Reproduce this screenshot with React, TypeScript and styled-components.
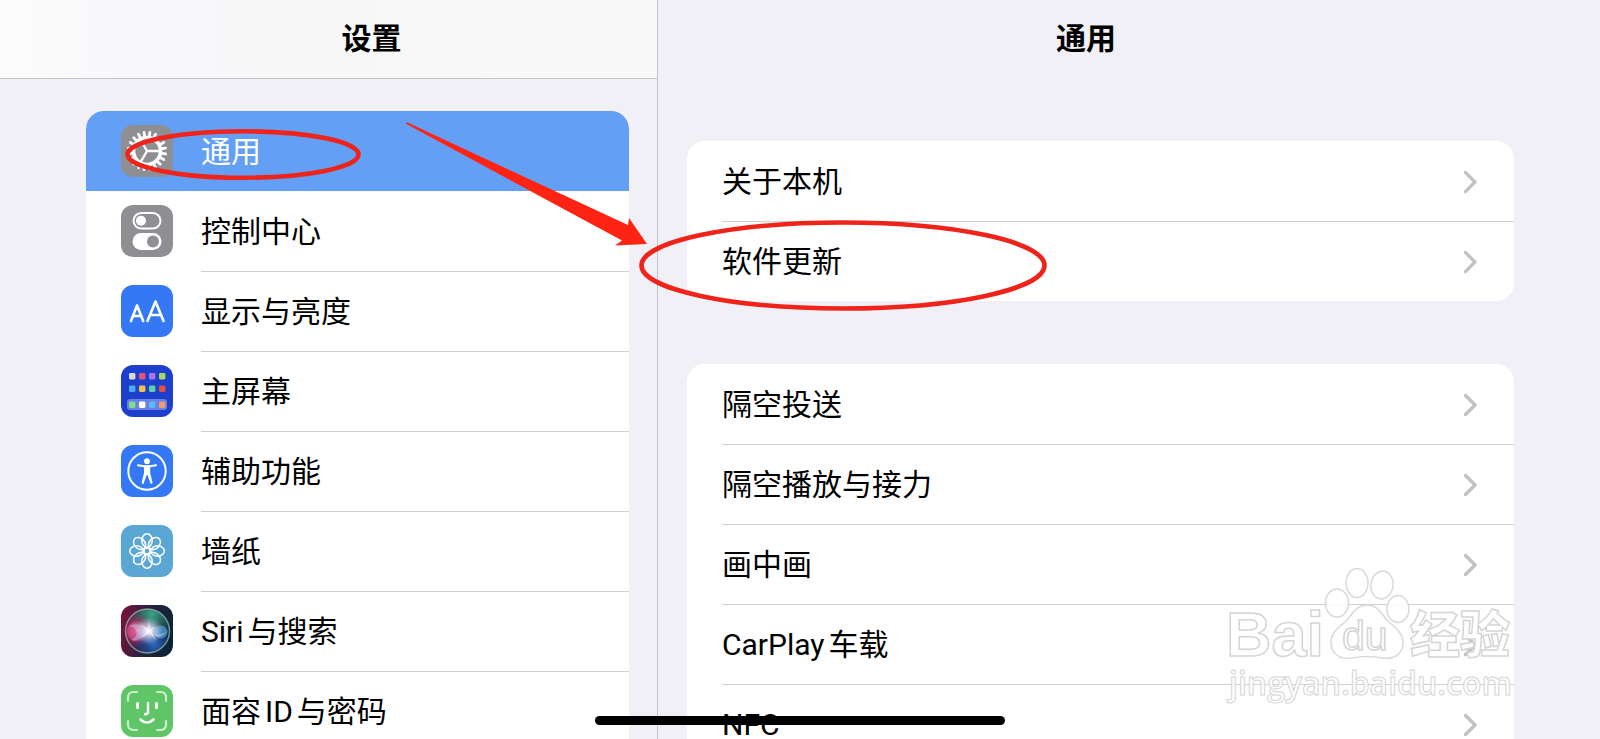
import React from 'react';
import styled, { createGlobalStyle } from 'styled-components';

const GlobalStyle = createGlobalStyle`
  * { box-sizing: border-box; }
  html, body { margin: 0; padding: 0; }
  body {
    background: #f1f0f6;
    color: #000;
    font-family: Roboto, "Noto Sans CJK SC", sans-serif;
    font-size: 30px;
    line-height: 40px;
    overflow: hidden;
  }
`;

const Screen = styled.div`
  position: relative;
  display: grid;
  grid-template-columns: 658px minmax(0, 1fr);
  height: 100vh;
  overflow: hidden;
`;

const Sidebar = styled.nav`
  border-right: 1px solid #c5c5c9;
  min-width: 0;
`;

const Detail = styled.main`
  min-width: 0;
  padding-right: 86px;
`;

const Header = styled.header<{ $bar?: boolean }>`
  display: flex;
  align-items: center;
  justify-content: center;
  height: 79px;
  padding-left: ${(p) => (p.$bar ? '86px' : '0')};
  border-bottom: 1px solid ${(p) => (p.$bar ? '#c6c6c9' : 'transparent')};
  background: ${(p) => (p.$bar ? 'linear-gradient(90deg, #fcfcfc 0, #f8f7fa 18%, #f7f7f8 45%, #f9f9f9 100%)' : 'none')};
`;

const Title = styled.h1`
  margin: 0;
  font-size: 30px;
  line-height: 40px;
  font-weight: 600;
`;

const SideList = styled.ul`
  list-style: none;
  margin: 32px 28px 0 86px;
  padding: 0;
  border-radius: 18px 18px 0 0;
  overflow: hidden;
  background: #fff;
`;

const Groups = styled.div`
  display: flex;
  flex-direction: column;
  gap: 63px;
  margin: 62px 0 0 29px;
`;

const Group = styled.ul`
  list-style: none;
  margin: 0;
  padding: 0;
  border-radius: 18px;
  overflow: hidden;
  background: #fff;
`;

const Label = styled.span<{ $divided: boolean }>`
  flex: 1;
  display: flex;
  align-items: center;
  justify-content: space-between;
  height: 80px;
  padding-right: 37px;
  border-top: 1px solid ${(p) => (p.$divided ? '#d0d0d3' : 'transparent')};
  white-space: nowrap;
`;

const Latin = styled.span<{ $inner: boolean }>`
  margin-left: ${(p) => (p.$inner ? '4px' : '0')};
  margin-right: 4px;
`;

const Row = styled.button<{ $active?: boolean }>`
  display: flex;
  align-items: center;
  gap: 28px;
  width: 100%;
  height: 80px;
  padding: 0 0 0 35px;
  border: 0;
  background: ${(p) => (p.$active ? '#649ff6' : 'transparent')};
  color: ${(p) => (p.$active ? '#fff' : '#000')};
  font: inherit;
  text-align: left;
  cursor: pointer;
`;

const Tile = styled.svg`
  flex: none;
  width: 52px;
  height: 52px;
  border-radius: 12px;
`;

const HomeBar = styled.div`
  position: absolute;
  left: 50%;
  bottom: 14px;
  width: 410px;
  height: 9px;
  margin-left: -205px;
  border-radius: 5px;
  background: #000;
`;

const Markup = styled.svg`
  position: absolute;
  top: 0;
  left: 0;
  pointer-events: none;
`;

const Watermark = styled.svg`
  position: absolute;
  right: 82px;
  bottom: 29px;
  pointer-events: none;
`;

const Arrow = styled.svg`
  flex: none;
  width: 14px;
  height: 24px;
`;

const Chevron = () => (
  <Arrow viewBox="0 0 14 24" aria-hidden="true">
    <path d="M2.5 2.5 12 12l-9.500 9.500" fill="none" stroke="#c3c3c5" strokeWidth="3.400" strokeLinecap="round" strokeLinejoin="round" />
  </Arrow>
);

// Latin words inside Chinese labels get a small gap on each side.
const Name = ({ text }: { text: string }) => (
  <span>
    {text.split(/([A-Za-z]+)/).filter(Boolean).map((part, i) =>
      /[A-Za-z]/.test(part) ? <Latin key={i} $inner={i > 0}>{part}</Latin> : part,
    )}
  </span>
);

const spin = (n: number, draw: (angle: number) => React.ReactNode) =>
  Array.from({ length: n }, (_, i) => draw((360 / n) * i));

const GearIcon = () => (
  <Tile viewBox="0 0 52 52">
    <rect width="52" height="52" fill="#8e8e93" />
    <g stroke="#fff" fill="none">
      <circle cx="26" cy="26" r="13.500" strokeWidth="3.600" />
      {spin(20, (a) => (
        <path key={a} d="M26 12V7.200" strokeWidth="2.800" strokeLinecap="round" transform={`rotate(${a + 9} 26 26)`} />
      ))}
      {spin(3, (a) => (
        <path key={a} d="M26 26h13" strokeWidth="2.400" transform={`rotate(${a} 26 26)`} />
      ))}
    </g>
  </Tile>
);

const ControlIcon = () => (
  <Tile viewBox="0 0 52 52">
    <rect width="52" height="52" fill="#8e8e93" />
    <rect x="12.500" y="8" width="27" height="15.500" rx="7.750" fill="none" stroke="#fff" strokeWidth="2" />
    <circle cx="20" cy="15.700" r="5" fill="#fff" />
    <rect x="11.500" y="28" width="29" height="17" rx="8.500" fill="#fff" />
    <circle cx="32" cy="36.500" r="6" fill="#8e8e93" />
  </Tile>
);

const DisplayIcon = () => (
  <Tile viewBox="0 0 52 52">
    <rect width="52" height="52" fill="#3478f6" />
    <g fill="none" stroke="#fff" strokeWidth="2.600" strokeLinecap="round" strokeLinejoin="round">
      <path d="M10 36l6-15.500L22.200 36M12 31h8" />
      <path d="M26.500 36l8-19.500L42.500 36M29.300 30h10.400" />
    </g>
  </Tile>
);

const homeDots = [
  ['#d8dbe8', '#e0567a', '#a874f5', '#a8d860'],
  ['#4cabf5', '#f3c04c', '#5fcfa8', '#ec4b46'],
  ['#7fdc90', '#ffffff', '#5cb8fa', '#ef9a6c'],
];

const HomeIcon = () => (
  <Tile viewBox="0 0 52 52">
    <rect width="52" height="52" fill="#1d40cc" />
    <rect x="6" y="34" width="40" height="11" rx="3" fill="#6a82df" />
    {homeDots.map((row, y) =>
      row.map((c, x) => (
        <rect key={`${x}${y}`} x={8 + x * 10} y={[8, 20.500, 36.500][y]} width="6.400" height="6.400" rx="1.400" fill={c} />
      )),
    )}
  </Tile>
);

const AccessIcon = () => (
  <Tile viewBox="0 0 52 52">
    <rect width="52" height="52" fill="#3478f6" />
    <circle cx="26" cy="26" r="18.700" fill="none" stroke="#fff" strokeWidth="2" />
    <circle cx="26" cy="16.200" r="2.900" fill="#fff" />
    <path d="M17 20.300l6 1h6l6-1" fill="none" stroke="#fff" strokeWidth="2" strokeLinecap="round" />
    <path d="M23 20.500h6.200V28l2.300 9.500c.3 1.500-1.600 2-2.100.6L26.500 30h-.8l-2.900 8.100c-.5 1.400-2.400.9-2.100-.6L23 28z" fill="#fff" />
  </Tile>
);

const WallpaperIcon = () => (
  <Tile viewBox="0 0 52 52">
    <rect width="52" height="52" fill="#5aa7d6" />
    <g fill="none" stroke="#fff" strokeWidth="1.500">
      {spin(8, (a) => (
        <ellipse key={a} cx="26" cy="15.500" rx="5.200" ry="6.800" transform={`rotate(${a} 26 26)`} />
      ))}
      <circle cx="26" cy="26" r="3" />
    </g>
  </Tile>
);

const SiriIcon = () => (
  <Tile viewBox="0 0 52 52">
    <defs>
      <linearGradient id="siriBase" x1="0" y1="0.300" x2="1" y2="0.500">
        <stop offset="0" stopColor="#7a1238" />
        <stop offset="0.450" stopColor="#2c2040" />
        <stop offset="1" stopColor="#0a2436" />
      </linearGradient>
      <radialGradient id="siriGreen" cx="0.600" cy="0.120" r="0.600">
        <stop offset="0" stopColor="#3aa884" />
        <stop offset="1" stopColor="#2a7a6c" stopOpacity="0" />
      </radialGradient>
      <radialGradient id="siriPink" cx="0.250" cy="0.500" r="0.400">
        <stop offset="0" stopColor="#f0508c" />
        <stop offset="1" stopColor="#c02868" stopOpacity="0" />
      </radialGradient>
      <radialGradient id="siriBlue" cx="0.650" cy="0.800" r="0.500">
        <stop offset="0" stopColor="#2b68c0" />
        <stop offset="1" stopColor="#1c4aa0" stopOpacity="0" />
      </radialGradient>
      <radialGradient id="siriGlow">
        <stop offset="0" stopColor="#fff" />
        <stop offset="0.250" stopColor="#f3f0ff" stopOpacity="0.850" />
        <stop offset="1" stopColor="#c0d8f0" stopOpacity="0" />
      </radialGradient>
    </defs>
    <rect width="52" height="52" fill="url(#siriBase)" />
    <circle cx="26.500" cy="26" r="22" fill="url(#siriGreen)" />
    <circle cx="26.500" cy="26" r="22" fill="url(#siriPink)" />
    <circle cx="26.500" cy="26" r="22" fill="url(#siriBlue)" />
    <circle cx="26.500" cy="26" r="22" fill="none" stroke="#9cc4bc" strokeOpacity="0.700" strokeWidth="1.400" />
    <circle cx="16" cy="26.500" r="10" fill="#f080a8" fillOpacity="0.350" />
    <circle cx="40" cy="27" r="6.500" fill="#5cb0ec" fillOpacity="0.600" />
    <path d="M8 21c8-4 14-1 20 5 6 5 12 4 18 0-6 9-12 6-18 0-6 6-12 11-18 9 8-3 8-12-2-14z" fill="#c8d4fa" fillOpacity="0.450" />
    <circle cx="28" cy="26" r="14" fill="url(#siriGlow)" />
    <path d="M28 14l1 10 8-3-7 5 5 9-7-7-8 5 6-7-7-7 8 5z" fill="#fff" fillOpacity="0.500" />
  </Tile>
);

const FaceIcon = () => (
  <Tile viewBox="0 0 52 52">
    <rect width="52" height="52" fill="#5fc566" />
    <g fill="none" strokeLinecap="round">
      <path d="M7 16v-3.500C7 9 9 7 12.500 7H16M36 7h3.500C43 7 45 9 45 12.500V16M45 36v3.500c0 3.500-2 5.500-5.500 5.500H36M16 45h-3.500C9 45 7 43 7 39.500V36" stroke="#c9efcb" strokeWidth="2.200" />
      <path d="M16.500 18.500v4M35.500 18.500v4" stroke="#fff" strokeWidth="3" />
      <path d="M27 18v9c0 1.500-1 2.200-3 2.200" stroke="#fff" strokeWidth="2.400" />
      <path d="M19.500 34.500c4 4 9 4 13 0" stroke="#fff" strokeWidth="2.600" />
    </g>
  </Tile>
);

const sections = [
  { name: '通用', Icon: GearIcon, active: true },
  { name: '控制中心', Icon: ControlIcon },
  { name: '显示与亮度', Icon: DisplayIcon },
  { name: '主屏幕', Icon: HomeIcon },
  { name: '辅助功能', Icon: AccessIcon },
  { name: '墙纸', Icon: WallpaperIcon },
  { name: 'Siri与搜索', Icon: SiriIcon },
  { name: '面容ID与密码', Icon: FaceIcon },
];

const groups = [
  ['关于本机', '软件更新'],
  ['隔空投送', '隔空播放与接力', '画中画', 'CarPlay车载', 'NFC'],
];

const BaiduMark = () => (
  <Watermark width="292" height="146" viewBox="1226 564 292 146" aria-hidden="true">
    <g fill="#fff" fillOpacity="0.850" stroke="#d9d9d9" strokeWidth="1.500">
      <ellipse cx="1337" cy="603" rx="11.500" ry="14" />
      <ellipse cx="1357" cy="583" rx="11" ry="14.500" />
      <ellipse cx="1382" cy="585" rx="11" ry="14" transform="rotate(8 1382 585)" />
      <ellipse cx="1398" cy="609" rx="11" ry="13.500" />
      <path d="M1367 605c12 0 14 10 22 17 9 7 15 14 14 22-1 11-10 16-21 14-10-2-20-2-30 0-12 2-21-4-21-16 0-9 7-14 14-20 8-7 10-17 22-17z" />
    </g>
    <g fill="#fff" fillOpacity="0.900" stroke="#d4d4d4" strokeWidth="1.500">
      <text x="1226" y="656" fontFamily="Liberation Sans, sans-serif" fontWeight="700" fontSize="63">Bai</text>
      <text x="1342" y="650" fontFamily="Liberation Sans, sans-serif" fontSize="41">du</text>
      <text x="1410" y="653" fontFamily="Noto Sans CJK SC, sans-serif" fontWeight="900" fontSize="50">经验</text>
      <text x="1229" y="695" fontFamily="Open Sans, sans-serif" fontWeight="600" fontSize="32" strokeWidth="1">jingyan.baidu.com</text>
    </g>
  </Watermark>
);

export default function App() {
  return (
    <>
      <GlobalStyle />
      <Screen>
        <Sidebar aria-label="设置">
          <Header $bar>
            <Title>设置</Title>
          </Header>
          <SideList>
            {sections.map(({ name, Icon, active }, i) => (
              <li key={name}>
                <Row $active={active} aria-current={active ? 'page' : undefined}>
                  <Icon />
                  <Label $divided={i > 1}>
                    <Name text={name} />
                  </Label>
                </Row>
              </li>
            ))}
          </SideList>
        </Sidebar>
        <Detail>
          <Header>
            <Title as="h2">通用</Title>
          </Header>
          <Groups>
            {groups.map((items) => (
              <Group key={items[0]}>
                {items.map((name, i) => (
                  <li key={name}>
                    <Row>
                      <Label $divided={i > 0}>
                        <Name text={name} />
                        <Chevron />
                      </Label>
                    </Row>
                  </li>
                ))}
              </Group>
            ))}
          </Groups>
        </Detail>
        <BaiduMark />
        <Markup width="1060" height="320" viewBox="0 0 1060 320" aria-hidden="true">
          <g fill="none" stroke="#f0231a" strokeWidth="4.600">
            <ellipse cx="243" cy="154.500" rx="115.500" ry="23.200" />
            <ellipse cx="843" cy="265.500" rx="201.500" ry="43" />
          </g>
          <path d="M405.500 123.500 407 122.300 628 225l1-7 18 26-32 1.500 7-5z" fill="#ff2314" />
        </Markup>
        <HomeBar />
      </Screen>
    </>
  );
}
